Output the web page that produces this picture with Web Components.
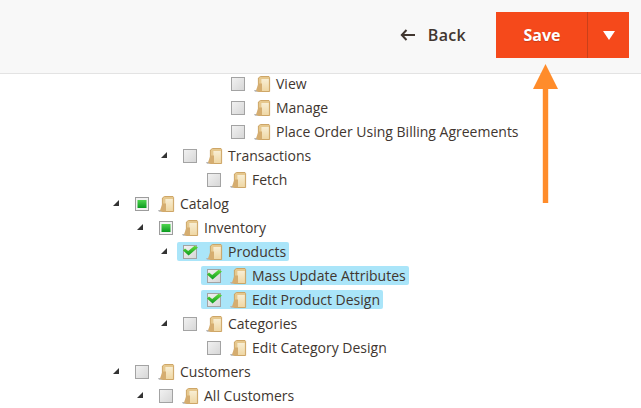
<!DOCTYPE html>
<html>
<head>
<meta charset="utf-8">
<title>Role resources</title>
<style>
  html, body { margin: 0; padding: 0; height: 100%; overflow: hidden; background: #fff; }
  body { font-family: "Open Sans", "Liberation Sans", sans-serif; position: relative; }
</style>
</head>
<body>
<page-actions></page-actions>
<resource-tree>
  <tree-node depth="4" state="empty">View</tree-node>
  <tree-node depth="4" state="empty">Manage</tree-node>
  <tree-node depth="4" state="empty">Place Order Using Billing Agreements</tree-node>
  <tree-node depth="2" state="empty" open>Transactions</tree-node>
  <tree-node depth="3" state="empty">Fetch</tree-node>
  <tree-node depth="0" state="partial" open>Catalog</tree-node>
  <tree-node depth="1" state="partial" open>Inventory</tree-node>
  <tree-node depth="2" state="checked" open>Products</tree-node>
  <tree-node depth="3" state="checked">Mass Update Attributes</tree-node>
  <tree-node depth="3" state="checked">Edit Product Design</tree-node>
  <tree-node depth="2" state="empty" open>Categories</tree-node>
  <tree-node depth="3" state="empty">Edit Category Design</tree-node>
  <tree-node depth="0" state="empty" open>Customers</tree-node>
  <tree-node depth="1" state="empty" open>All Customers</tree-node>
</resource-tree>
<callout-arrow></callout-arrow>

<script>
class PageActions extends HTMLElement {
  constructor() {
    super();
    this.attachShadow({ mode: 'open' });
    this.shadowRoot.innerHTML = `
      <style>
        :host {
          display: flex;
          align-items: center;
          justify-content: flex-end;
          box-sizing: border-box;
          height: 74px;
          padding: 0 12px 3px 0;
          background: #f8f8f8;
          border-bottom: 1px solid #e3e3e3;
        }
        .back {
          display: flex;
          align-items: center;
          gap: 13px;
          margin-right: 30px;
          color: #41362f;
          font-size: 16px;
          font-weight: 600;
          letter-spacing: .3px;
        }
        .back span { margin-top: -1px; }
        .back svg { display: block; }
        .split { display: flex; height: 46px; background: #f5491b; color: #fff; }
        .save {
          width: 92px;
          display: flex;
          align-items: center;
          justify-content: center;
          padding: 0 0 1px 1px;
          box-sizing: border-box;
          font-size: 16px;
          font-weight: 700;
          text-shadow: 0 1px 1px rgba(0,0,0,.2);
          border-right: 1px solid #c9401a;
        }
        .more { width: 41px; display: flex; align-items: center; justify-content: center; padding-top: 1px; box-sizing: border-box; }
      </style>
      <div class="back">
        <svg width="15" height="12" viewBox="0 0 15 12"><path d="M6.5 1 1.8 6l4.7 5M2 6h13" fill="none" stroke="#41362f" stroke-width="2"/></svg>
        <span>Back</span>
      </div>
      <div class="split">
        <div class="save">Save</div>
        <div class="more"><svg width="12" height="9" viewBox="0 0 12 9"><path d="M0 0h12L6 9z" fill="#fff"/></svg></div>
      </div>`;
  }
}
customElements.define('page-actions', PageActions);

class ResourceTree extends HTMLElement {
  constructor() {
    super();
    this.attachShadow({ mode: 'open' });
    this.shadowRoot.innerHTML = `
      <style>
        :host { display: block; margin-top: -3px; padding-left: 111px; }
      </style>
      <slot></slot>`;
  }
}
customElements.define('resource-tree', ResourceTree);

class TreeNode extends HTMLElement {
  constructor() {
    super();
    this.attachShadow({ mode: 'open' });
  }

  connectedCallback() {
    const depth = Number(this.getAttribute('depth') || 0);
    const state = this.getAttribute('state') || 'empty';
    const open = this.hasAttribute('open');
    const id = 'g' + Math.random().toString(36).slice(2, 8);

    const box = {
      empty: `<rect x=".5" y=".5" width="13" height="13" fill="url(#${id}e)" stroke="#a3a3a3"/>`,
      partial: `<rect x=".5" y=".5" width="13" height="13" fill="#f2f2f2" stroke="#9c9c9c"/><rect x="2.5" y="3" width="9" height="8" fill="url(#${id}p)"/>`,
      checked: `<rect x=".5" y=".5" width="13" height="13" fill="url(#${id}e)" stroke="#a3a3a3"/><path d="M0 5.5 2 3.5 5.2 6 11.6 .8 15 2.6 5.6 10.6z" fill="url(#${id}c)"/>`
    }[state];

    this.shadowRoot.innerHTML = `
      <style>
        :host {
          display: flex;
          align-items: center;
          height: 24px;
          padding-left: ${depth * 24}px;
          color: #41362f;
          font-size: 14px;
          white-space: nowrap;
        }
        .toggle { width: 24px; flex: none; display: flex; padding-left: 2px; box-sizing: border-box; }
        .item {
          display: flex;
          align-items: center;
          height: 19px;
          padding: 0 3px 0 6px;
          margin-left: -6px;
          border-radius: 2px;
        }
        :host([state="checked"]) .item { background: #aae5f9; }
        svg { display: block; flex: none; }
        .check { margin-top: 2px; overflow: visible; }
        .folder { margin: 2px 5px 0 8px; }
      </style>
      <span class="toggle">${open ? '<svg width="6" height="6" viewBox="0 0 6 6"><path d="M6 0v6H0z" fill="#333"/></svg>' : ''}</span>
      <span class="item">
        <svg class="check" width="15" height="14" viewBox="0 0 15 14">
          <defs>
            <linearGradient id="${id}e" x1="0" y1="0" x2="1" y2="1"><stop offset="0" stop-color="#f2f2f2"/><stop offset="1" stop-color="#d6d6d6"/></linearGradient>
            <linearGradient id="${id}p" x1="0" y1="0" x2="0" y2="1"><stop offset="0" stop-color="#4fd44f"/><stop offset="1" stop-color="#0a9a1e"/></linearGradient>
            <linearGradient id="${id}c" x1="0" y1="0" x2="0" y2="1"><stop offset="0" stop-color="#5fdc3c"/><stop offset="1" stop-color="#0c9a22"/></linearGradient>
          </defs>
          ${box}
        </svg>
        <svg class="folder" width="17" height="16" viewBox="0 0 17 16">
          <defs><linearGradient id="${id}f" x1="0" y1="0" x2="0" y2="1"><stop offset="0" stop-color="#f8eed4"/><stop offset="1" stop-color="#efd7a4"/></linearGradient></defs>
          <path d="M0 14h4.5v1.8H1z" fill="#b5b5b5"/>
          <path d="M4.4 15.5V2L6.4.5h8.6l.6 1v14z" fill="#e6c88e" stroke="#c99f5c" stroke-width=".9"/>
          <path d="M7.4 3h7.4v12H7.4z" fill="url(#${id}f)"/>
          <path d="M2 14.5 4.4 7.5h3.6v8H3z" fill="#d5ad70"/>
        </svg>
        <slot></slot>
      </span>`;
  }
}
customElements.define('tree-node', TreeNode);

class CalloutArrow extends HTMLElement {
  constructor() {
    super();
    this.attachShadow({ mode: 'open' });
    this.shadowRoot.innerHTML = `
      <style>
        :host { position: absolute; left: 533px; top: 64px; width: 25px; height: 140px; }
        svg { display: block; }
      </style>
      <svg width="25" height="140" viewBox="0 0 25 140"><path d="M12.5 0 25 25H15.2V139H9.8V25H0z" fill="#ff8c2b"/></svg>`;
  }
}
customElements.define('callout-arrow', CalloutArrow);
</script>
</body>
</html>
